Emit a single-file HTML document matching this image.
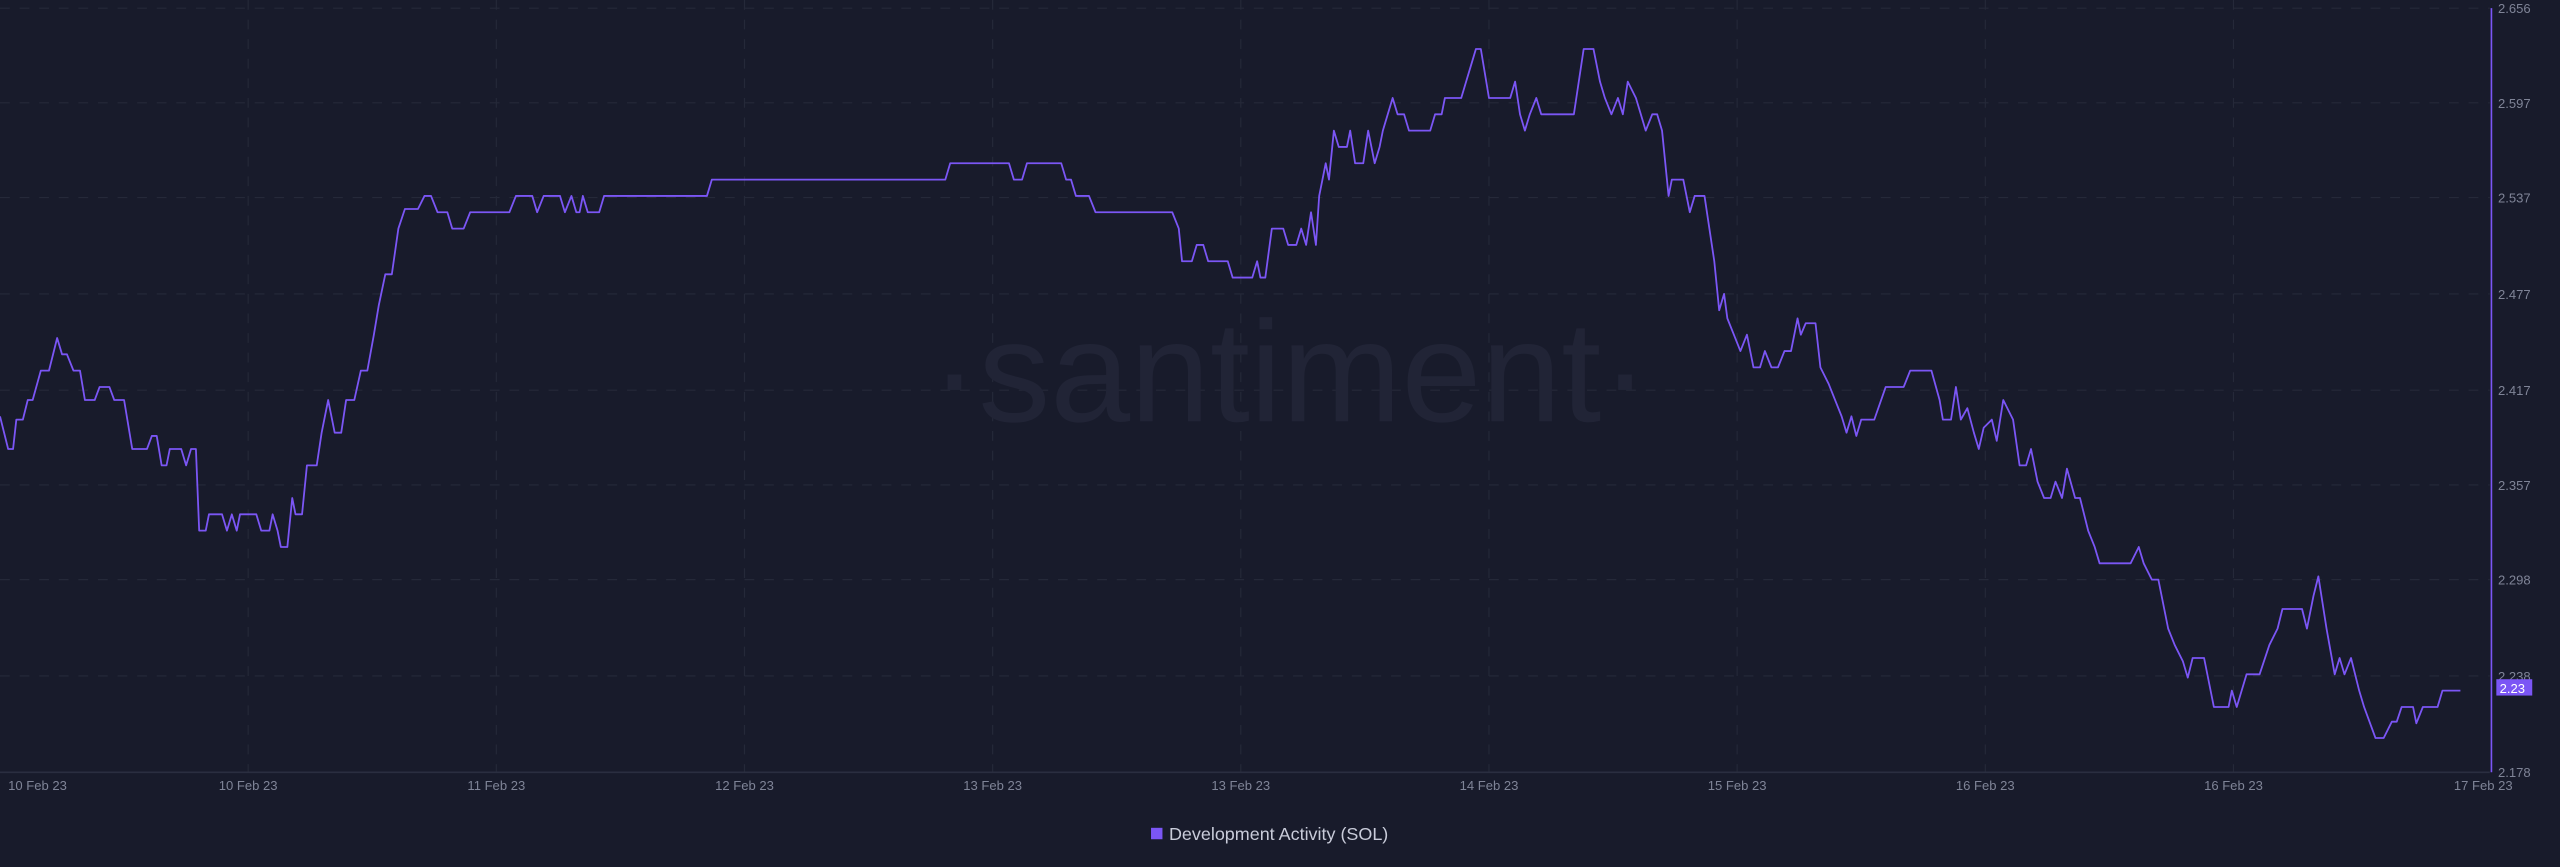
<!DOCTYPE html>
<html><head><meta charset="utf-8"><style>
html,body{margin:0;padding:0;background:#181b2b;overflow:hidden}
svg{display:block}
text{font-family:"Liberation Sans",sans-serif}
</style></head><body>
<svg width="2560" height="867" viewBox="0 0 1568 531" preserveAspectRatio="none" xmlns="http://www.w3.org/2000/svg">
<rect width="1568" height="531" fill="#181b2b"/>
<g stroke="#252939" stroke-width="0.7" stroke-dasharray="6,6">
<line x1="0" y1="5" x2="1525" y2="5"/><line x1="0" y1="63" x2="1525" y2="63"/><line x1="0" y1="121" x2="1525" y2="121"/><line x1="0" y1="180" x2="1525" y2="180"/><line x1="0" y1="239" x2="1525" y2="239"/><line x1="0" y1="297" x2="1525" y2="297"/><line x1="0" y1="355" x2="1525" y2="355"/><line x1="0" y1="414" x2="1525" y2="414"/>
<line x1="152" y1="0" x2="152" y2="473"/><line x1="304" y1="0" x2="304" y2="473"/><line x1="456" y1="0" x2="456" y2="473"/><line x1="608" y1="0" x2="608" y2="473"/><line x1="760" y1="0" x2="760" y2="473"/><line x1="912" y1="0" x2="912" y2="473"/><line x1="1064" y1="0" x2="1064" y2="473"/><line x1="1216" y1="0" x2="1216" y2="473"/><line x1="1368" y1="0" x2="1368" y2="473"/>
</g>
<line x1="0" y1="473" x2="1525" y2="473" stroke="#2a2e40" stroke-width="1"/>
<text x="790" y="258" text-anchor="middle" font-size="88" fill="#212436" font-weight="300">·santiment·</text>
<polyline fill="none" stroke="#7b56f5" stroke-width="1.1" stroke-linejoin="round" points="0,255 5,275 8,275 10,257 14,257 17,245 20,245 25,227 30,227 35,207 38,217 41,217 45,227 49,227 52,245 58,245 61,237 67,237 70,245 76,245 81,275 90,275 93,267 96,267 99,285 102,285 104,275 111,275 114,285 117,275 120,275 122,325 126,325 128,315 136,315 139,325 142,315 145,325 147,315 157,315 160,325 165,325 167,315 170,325 172,335 176,335 179,305 181,315 185,315 188,285 194,285 197,265 201,245 205,265 209,265 212,245 217,245 221,227 225,227 229,205 232,187 236,168 240,168 244,140 248,128 256,128 260,120 264,120 268,130 274,130 277,140 284,140 288,130 312,130 316,120 326,120 329,130 333,120 343,120 346,130 350,120 353,130 355,130 357,120 360,130 367,130 370,120 433,120 436,110 579,110 582,100 618,100 621,110 626,110 629,100 650,100 653,110 656,110 659,120 667,120 671,130 718,130 722,140 724,160 730,160 733,150 737,150 740,160 752,160 755,170 767,170 770,160 772,170 775,170 779,140 786,140 789,150 794,150 797,140 800,150 803,130 806,150 808,120 812,100 814,110 817,80 820,90 825,90 827,80 830,100 835,100 838,80 842,100 845,90 847,80 850,70 853,60 856,70 860,70 863,80 876,80 879,70 883,70 885,60 895,60 898,50 901,40 904,30 907,30 912,60 925,60 928,50 931,70 934,80 937,70 941,60 944,70 950,70 964,70 967,50 970,30 976,30 980,50 983,60 987,70 991,60 994,70 997,50 1002,60 1005,70 1008,80 1012,70 1015,70 1018,80 1022,120 1024,110 1031,110 1035,130 1038,120 1044,120 1047,140 1050,160 1053,190 1056,180 1058,195 1062,205 1066,215 1070,205 1074,225 1078,225 1081,215 1085,225 1089,225 1093,215 1097,215 1101,195 1103,205 1106,198 1112,198 1115,225 1120,235 1124,245 1128,255 1131,265 1134,255 1137,267 1140,257 1148,257 1155,237 1166,237 1170,227 1183,227 1188,245 1190,257 1195,257 1198,237 1201,257 1205,250 1209,265 1212,275 1215,262 1220,257 1223,270 1227,245 1233,257 1237,285 1241,285 1244,275 1248,295 1252,305 1256,305 1259,295 1263,305 1266,287 1271,305 1274,305 1279,325 1283,335 1286,345 1305,345 1310,335 1313,345 1318,355 1322,355 1328,385 1332,395 1337,405 1340,415 1343,403 1350,403 1356,433 1365,433 1367,423 1370,433 1376,413 1384,413 1390,395 1395,385 1398,373 1410,373 1413,385 1417,365 1420,353 1425,385 1430,413 1433,403 1436,413 1440,403 1445,423 1448,433 1455,452 1460,452 1465,442 1468,442 1471,433 1478,433 1480,443 1484,433 1493,433 1496,423 1507,423"/>
<line x1="1526" y1="5" x2="1526" y2="473" stroke="#7b56f5" stroke-width="1"/>
<g font-size="8" fill="#7f8497">
<text x="1530" y="8">2.656</text><text x="1530" y="66">2.597</text><text x="1530" y="124">2.537</text><text x="1530" y="183">2.477</text><text x="1530" y="242">2.417</text><text x="1530" y="300">2.357</text><text x="1530" y="358">2.298</text><text x="1530" y="417">2.238</text><text x="1530" y="476">2.178</text>
</g>
<rect x="1529" y="416" width="22" height="10" fill="#7b56f5"/>
<text x="1531" y="424.5" font-size="8" fill="#ffffff">2.23</text>
<g font-size="8" fill="#7f8497" text-anchor="middle">
<text x="23" y="484">10 Feb 23</text><text x="152" y="484">10 Feb 23</text><text x="304" y="484">11 Feb 23</text><text x="456" y="484">12 Feb 23</text><text x="608" y="484">13 Feb 23</text><text x="760" y="484">13 Feb 23</text><text x="912" y="484">14 Feb 23</text><text x="1064" y="484">15 Feb 23</text><text x="1216" y="484">16 Feb 23</text><text x="1368" y="484">16 Feb 23</text><text x="1521" y="484">17 Feb 23</text>
</g>
<rect x="705" y="507" width="7" height="7" fill="#7b56f5"/>
<text x="716" y="514.5" font-size="11" fill="#c9ccda">Development Activity (SOL)</text>
</svg>
</body></html>
